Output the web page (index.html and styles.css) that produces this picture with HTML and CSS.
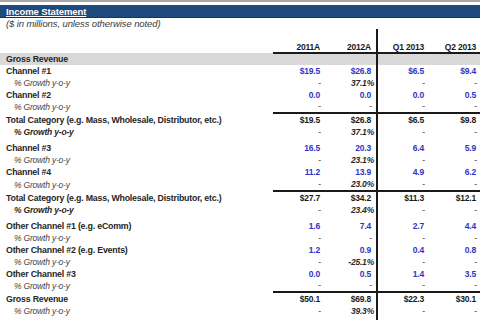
FILE: index.html
```html
<!DOCTYPE html>
<html>
<head>
<meta charset="utf-8">
<link rel="stylesheet" href="styles.css">
</head>
<body>
<div class="topline"></div>
<div class="titlebar"><span class="title">Income Statement</span></div>
<div class="subtitle">($ in millions, unless otherwise noted)</div>
<table class="is">
  <colgroup>
    <col class="c-label"><col class="c-val"><col class="c-val"><col class="c-val"><col class="c-val">
  </colgroup>
  <tr class="head">
    <td></td><td class="v">2011A</td><td class="v">2012A</td><td class="v q sep">Q1 2013</td><td class="v q">Q2 2013</td>
  </tr>
  <tr class="band">
    <td class="lbl">Gross Revenue</td><td></td><td></td><td class="sep"></td><td></td>
  </tr>
  <tr class="row">
    <td class="lbl">Channel #1</td><td class="v in">$19.5</td><td class="v in">$26.8</td><td class="v in sep">$6.5</td><td class="v in">$9.4</td>
  </tr>
  <tr class="row g">
    <td class="lbl">% Growth y-o-y</td><td class="v d">-</td><td class="v p">37.1%</td><td class="v d sep">-</td><td class="v d">-</td>
  </tr>
  <tr class="row">
    <td class="lbl">Channel #2</td><td class="v in">0.0</td><td class="v in">0.0</td><td class="v in sep">0.0</td><td class="v in">0.5</td>
  </tr>
  <tr class="row g short">
    <td class="lbl">% Growth y-o-y</td><td class="v d">-</td><td class="v d">-</td><td class="v d sep">-</td><td class="v d">-</td>
  </tr>
  <tr class="row tot">
    <td class="lbl">Total Category (e.g. Mass, Wholesale, Distributor, etc.)</td><td class="v">$19.5</td><td class="v">$26.8</td><td class="v sep">$6.5</td><td class="v">$9.8</td>
  </tr>
  <tr class="row g gb">
    <td class="lbl">% Growth y-o-y</td><td class="v d">-</td><td class="v p">37.1%</td><td class="v d sep">-</td><td class="v d">-</td>
  </tr>
  <tr class="spacer"><td></td><td></td><td></td><td class="sep"></td><td></td></tr>
  <tr class="row">
    <td class="lbl">Channel #3</td><td class="v in">16.5</td><td class="v in">20.3</td><td class="v in sep">6.4</td><td class="v in">5.9</td>
  </tr>
  <tr class="row g">
    <td class="lbl">% Growth y-o-y</td><td class="v d">-</td><td class="v p">23.1%</td><td class="v d sep">-</td><td class="v d">-</td>
  </tr>
  <tr class="row">
    <td class="lbl">Channel #4</td><td class="v in">11.2</td><td class="v in">13.9</td><td class="v in sep">4.9</td><td class="v in">6.2</td>
  </tr>
  <tr class="row g">
    <td class="lbl">% Growth y-o-y</td><td class="v d">-</td><td class="v p">23.0%</td><td class="v d sep">-</td><td class="v d">-</td>
  </tr>
  <tr class="row tot">
    <td class="lbl">Total Category (e.g. Mass, Wholesale, Distributor, etc.)</td><td class="v">$27.7</td><td class="v">$34.2</td><td class="v sep">$11.3</td><td class="v">$12.1</td>
  </tr>
  <tr class="row g gb">
    <td class="lbl">% Growth y-o-y</td><td class="v d">-</td><td class="v p">23.4%</td><td class="v d sep">-</td><td class="v d">-</td>
  </tr>
  <tr class="spacer"><td></td><td></td><td></td><td class="sep"></td><td></td></tr>
  <tr class="row">
    <td class="lbl">Other Channel #1 (e.g. eComm)</td><td class="v in">1.6</td><td class="v in">7.4</td><td class="v in sep">2.7</td><td class="v in">4.4</td>
  </tr>
  <tr class="row g">
    <td class="lbl">% Growth y-o-y</td><td class="v d">-</td><td class="v d">-</td><td class="v d sep">-</td><td class="v d">-</td>
  </tr>
  <tr class="row">
    <td class="lbl">Other Channel #2 (e.g. Events)</td><td class="v in">1.2</td><td class="v in">0.9</td><td class="v in sep">0.4</td><td class="v in">0.8</td>
  </tr>
  <tr class="row g">
    <td class="lbl">% Growth y-o-y</td><td class="v d">-</td><td class="v p">-25.1%</td><td class="v d sep">-</td><td class="v d">-</td>
  </tr>
  <tr class="row">
    <td class="lbl">Other Channel #3</td><td class="v in">0.0</td><td class="v in">0.5</td><td class="v in sep">1.4</td><td class="v in">3.5</td>
  </tr>
  <tr class="row g short">
    <td class="lbl">% Growth y-o-y</td><td class="v d">-</td><td class="v d">-</td><td class="v d sep">-</td><td class="v d">-</td>
  </tr>
  <tr class="row tot">
    <td class="lbl">Gross Revenue</td><td class="v">$50.1</td><td class="v">$69.8</td><td class="v sep">$22.3</td><td class="v">$30.1</td>
  </tr>
  <tr class="row g">
    <td class="lbl">% Growth y-o-y</td><td class="v d">-</td><td class="v p">39.3%</td><td class="v d sep">-</td><td class="v d">-</td>
  </tr>
  <tr class="row"><td></td><td></td><td></td><td class="sep"></td><td></td></tr>
</table>
</body>
</html>
```

FILE: styles.css
```css
html, body {
  margin: 0;
  padding: 0;
  background: #ffffff;
  width: 480px;
  height: 320px;
  overflow: hidden;
  font-family: "Liberation Sans", Arial, sans-serif;
  color: #262626;
}

.topline {
  height: 2px;
  background: #a8a8a8;
}

.titlebar {
  margin-top: 3px;
  height: 12px;
  background: #1f4a7d;
  border-bottom: 1px solid #16355c;
  padding-left: 6px;
  display: flex;
  align-items: center;
}

.title {
  color: #ffffff;
  font-size: 9.5px;
  font-weight: bold;
  text-decoration: underline;
  letter-spacing: -0.1px;
}

.subtitle {
  height: 11px;
  line-height: 11px;
  padding-left: 6px;
  font-size: 9.5px;
  font-style: italic;
  color: #3a3a3a;
  letter-spacing: -0.1px;
}

.is {
  width: 480px;
  table-layout: fixed;
  border-collapse: collapse;
  border-spacing: 0;
}

.c-label { width: 273px; }
.c-val { width: 52px; }

.is td {
  padding: 0;
  font-size: 8.5px;
  font-weight: bold;
  white-space: nowrap;
  overflow: visible;
  letter-spacing: -0.2px;
}

.is td.lbl {
  font-size: 8.8px;
}

.is td.sep {
  border-left: 2px solid #1a1a1a;
}

.head td {
  height: 23px;
  vertical-align: bottom;
  padding-bottom: 0;
}

.head td.v {
  border-bottom: 2px solid #1a1a1a;
  color: #1a1a1a;
  text-align: right;
  padding-right: 3px;
}

.head td.q {
  padding-right: 5px !important;
}

.band td {
  height: 11px;
  background: #d9d9d9;
  line-height: 11px;
}

.lbl {
  padding-left: 6px !important;
  color: #262626;
}

.row td {
  height: 12px;
  line-height: 12px;
}

.row.short td {
  height: 11px;
  line-height: 11px;
}

.spacer td {
  height: 4px;
}

.v {
  text-align: right;
  padding-right: 5px !important;
}

.v.in {
  color: #3034c6;
}

.v.p {
  padding-right: 2px !important;
  font-style: italic;
  color: #2a2a2a;
}

.v.d {
  font-weight: normal;
  padding-right: 4px !important;
  color: #333333;
}

.g .lbl {
  padding-left: 14px !important;
  font-weight: normal;
  font-style: italic;
  color: #444444;
}

.is .g td.lbl {
  font-size: 8.5px;
}

.gb .lbl {
  font-weight: bold;
  color: #262626;
}

.tot td.v {
  border-top: 2px solid #1a1a1a;
  color: #1a1a1a;
}
```
